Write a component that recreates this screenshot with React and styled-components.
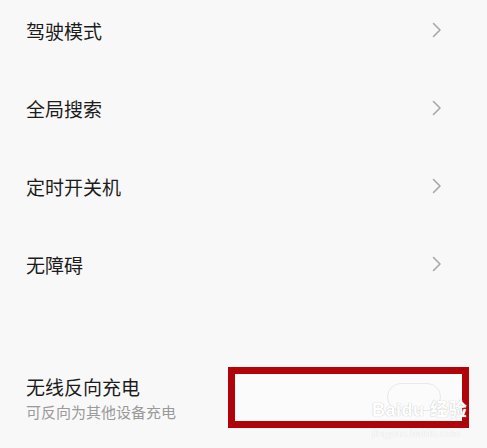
import React from 'react';
import styled, { createGlobalStyle } from 'styled-components';

const GlobalStyle = createGlobalStyle`
	html, body {
		margin: 0;
		padding: 0;
		background: #f8f8f8;
	}
	body {
		font-family: "Noto Sans CJK SC", "Noto Sans", sans-serif;
	}
`;

const Page = styled.div`
	width: 487px;
	height: 448px;
	overflow: hidden;
	background: #f8f8f8;
	display: flex;
	flex-direction: column;
`;

const List = styled.div`
	display: flex;
	flex-direction: column;
	gap: 12px;
	margin-top: -3px;
`;

const Row = styled.div`
	height: 66px;
	display: flex;
	align-items: center;
	justify-content: space-between;
	padding: 0 45px 0 26px;
`;

const Label = styled.div`
	font-size: 19px;
	color: #1c1c1c;
	line-height: 1;
`;

const Chevron = () => (
	<svg width="10" height="16" viewBox="0 0 10 16">
		<path d="M1.5 1.5 L8 8 L1.5 14.5" fill="none" stroke="#a8a8a8" strokeWidth="1.6" strokeLinecap="round" strokeLinejoin="round" />
	</svg>
);

const Bottom = styled.div`
	margin-top: 70px;
	display: flex;
	align-items: center;
	justify-content: space-between;
	padding: 0 18px 0 26px;
`;

const TextCol = styled.div`
	display: flex;
	flex-direction: column;
	gap: 8px;
`;

const SubLabel = styled.div`
	font-size: 15px;
	color: #9a9a9a;
	line-height: 1;
`;

const Highlight = styled.div`
	position: relative;
	width: 241px;
	height: 61px;
	box-sizing: border-box;
	border: 7px solid #b0040a;
	background: #fbfbfb;
`;

const GhostToggle = styled.div`
	position: absolute;
	left: 152px;
	top: 9px;
	width: 54px;
	height: 28px;
	border-radius: 14px;
	border: 1.5px solid #e8e8ee;
	box-sizing: border-box;
`;

const Watermark = styled.div`
	position: absolute;
	left: 137px;
	top: 27px;
	font-family: "Liberation Sans", "Noto Sans CJK SC", sans-serif;
	font-size: 18px;
	font-weight: bold;
	line-height: 1;
	color: #ffffff;
	text-shadow: 0 0 1px #c8c8c8, 0 0 1px #c8c8c8;
	white-space: nowrap;
	letter-spacing: 0.5px;
`;

const WatermarkUrl = styled.div`
	position: absolute;
	left: 137px;
	top: 54px;
	font-family: "Liberation Sans", sans-serif;
	font-size: 11px;
	line-height: 1;
	color: #ffffff;
	text-shadow: 0 0 1px #cfcfcf;
	white-space: nowrap;
`;

const items = ['驾驶模式', '全局搜索', '定时开关机', '无障碍'];

export default function App() {
	return (
		<Page>
			<GlobalStyle />
			<List>
				{items.map((item) => (
					<Row key={item}>
						<Label>{item}</Label>
						<Chevron />
					</Row>
				))}
			</List>
			<Bottom>
				<TextCol>
					<Label>无线反向充电</Label>
					<SubLabel>可反向为其他设备充电</SubLabel>
				</TextCol>
				<Highlight>
					<GhostToggle />
					<Watermark>Baidu 经验</Watermark>
					<WatermarkUrl>jingyan.baidu.com</WatermarkUrl>
				</Highlight>
			</Bottom>
		</Page>
	);
}
